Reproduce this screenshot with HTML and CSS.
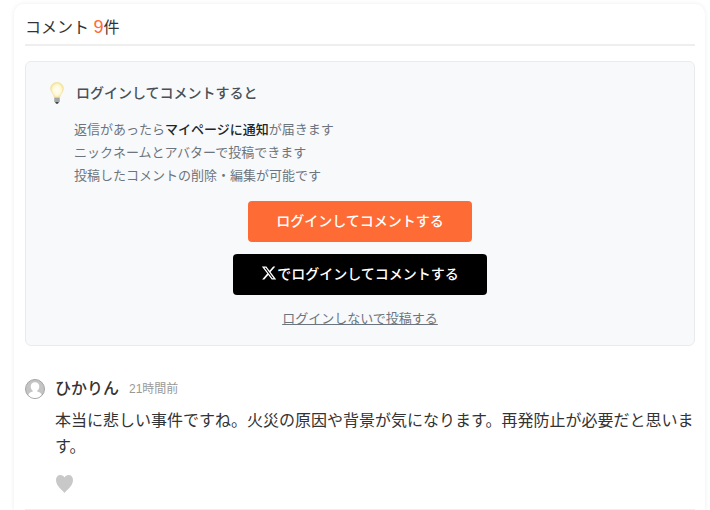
FILE: index.html
```html
<!DOCTYPE html>
<html lang="ja">
<head>
  <meta charset="UTF-8">
  <meta name="viewport" content="width=device-width, initial-scale=1">
  <title>コメント</title>
  <link rel="stylesheet" href="styles.css">
</head>
<body>
  <section class="comment-area">
    <h2 class="comment-title">コメント <span class="comment-count">9</span>件</h2>

    <div class="login-box">
      <h3 class="login-title">
        <svg class="icon-bulb" viewBox="0 0 16 24" aria-hidden="true">
          <defs>
            <radialGradient id="glow" cx="50%" cy="50%" r="55%">
              <stop offset="0" stop-color="#fffef8"/>
              <stop offset="0.6" stop-color="#fff8d6"/>
              <stop offset="1" stop-color="#f5dc85"/>
            </radialGradient>
          </defs>
          <path d="M8 1.500C4.200 1.500 1.600 4.200 1.600 7.600c0 3.900 3.500 5.200 3.700 9h5.400c.2-3.800 3.700-5.100 3.700-9C14.400 4.200 11.800 1.500 8 1.500z" fill="url(#glow)" stroke="#f0dc98" stroke-width=".6"/>
          <path d="M5.300 16.500h5.400v4L9.500 22h-3l-1.200-1.500z" fill="#b4b7b8"/>
          <path d="M5.300 18h5.400M5.300 20h5.400" stroke="#85898b" stroke-width=".7"/>
          <path d="M6.300 21h3.400L9 22.700H7z" fill="#414548"/>
        </svg>
        ログインしてコメントすると
      </h3>
      <ul class="login-list">
        <li>返信があったら<strong>マイページに通知</strong>が届きます</li>
        <li>ニックネームとアバターで投稿できます</li>
        <li>投稿したコメントの削除・編集が可能です</li>
      </ul>
      <div class="login-actions">
        <button type="button" class="btn btn-login">ログインしてコメントする</button>
        <button type="button" class="btn btn-x">
          <svg class="icon-x" viewBox="0 0 24 24" aria-hidden="true">
            <path d="M18.244 2.250h3.308l-7.227 8.260 8.502 11.240H16.170l-5.214-6.817L4.990 21.750H1.680l7.730-8.835L1.254 2.250H8.080l4.713 6.231zm-1.161 17.520h1.833L7.084 4.126H5.117z" fill="currentColor"/>
          </svg>でログインしてコメントする
        </button>
        <a href="#" class="guest-link">ログインしないで投稿する</a>
      </div>
    </div>

    <article class="comment">
      <svg class="avatar" viewBox="0 0 20 20" aria-hidden="true">
        <circle cx="10" cy="10" r="9.500" fill="#c4c4c4" stroke="#a4a4a4"/>
        <path d="M10 3.300c-2.700 0-4.300 1.800-4.300 4.200 0 1.800.9 3.400 2.100 4.200v.9c-1.800.7-3.900 1.200-4.500 3.100C5 17.800 7.400 19 10 19s5-1.200 6.700-3.300c-.6-1.900-2.700-2.400-4.500-3.100v-.9c1.200-.8 2.100-2.400 2.100-4.200 0-2.400-1.600-4.200-4.300-4.200z" fill="#fff"/>
      </svg>
      <div class="comment-body">
        <div class="comment-head">
          <span class="comment-name">ひかりん</span>
          <time class="comment-time">21時間前</time>
        </div>
        <p class="comment-text">本当に悲しい事件ですね。火災の原因や背景が気になります。再発防止が必要だと思います。</p>
        <button type="button" class="like" aria-label="いいね">
          <svg class="icon-heart" viewBox="0 0 18 20" aria-hidden="true">
            <path d="M9.500 19C8 16.200 1 12.600 1 6C1 3 2.800 1 5.300 1C7.400 1 8.800 2 9.500 3.500C10.200 2 11.600 1 13.700 1C16.200 1 18 3 18 6C18 12.600 11 16.200 9.500 19z" fill="#c8c8c8"/>
          </svg>
        </button>
      </div>
    </article>
  </section>
</body>
</html>
```

FILE: styles.css
```css
body {
  margin: 0;
  padding: 4px 5px 0 14px;
  background: #fff;
  color: #333;
  font-family: "Liberation Sans", "Noto Sans CJK JP", sans-serif;
  font-size: 16px;
}

/* card */
.comment-area {
  padding: 10px 10px 0 11px;
  border-radius: 10px 10px 0 0;
  box-shadow: 0 0 5px rgba(0, 0, 0, 0.08);
}
.comment-title {
  margin: 0 0 15px;
  padding-bottom: 3px;
  border-bottom: 2px solid #eee;
  font-size: 16px;
  font-weight: 400;
  line-height: 26px;
}
.comment-count {
  color: #ff6b35;
  font-size: 18px;
}

/* login guide */
.login-box {
  padding: 18px 20px 14px;
  border: 1px solid #e9ecef;
  border-radius: 6px;
  background: #f8f9fb;
}
.login-title {
  display: flex;
  align-items: center;
  gap: 8px;
  margin: 0 0 12px;
  color: #495057;
  font-size: 14px;
  font-weight: 500;
  line-height: 26px;
}
.icon-bulb {
  width: 22px;
  height: 24px;
}
.login-list {
  margin: 0 0 14px;
  padding: 0 0 0 28px;
  list-style: none;
  color: #6c757d;
  font-size: 13px;
  line-height: 23px;
}
.login-list strong {
  color: #212529;
  font-weight: 500;
}
.login-actions {
  display: flex;
  flex-direction: column;
  align-items: center;
  gap: 12px;
}
.btn {
  display: flex;
  align-items: center;
  height: 41px;
  padding: 0 28px 3px;
  border: 0;
  border-radius: 4px;
  color: #fff;
  font-family: inherit;
  font-size: 14px;
  font-weight: 500;
  cursor: pointer;
}
.btn-login {
  background: #ff6b35;
}
.btn-x {
  background: #000;
}
.icon-x {
  width: 16px;
  height: 16px;
}
.guest-link {
  color: #6c757d;
  font-size: 13px;
  line-height: 24px;
}

/* comment */
.comment {
  display: flex;
  gap: 10px;
  padding: 31px 0 15px;
  border-bottom: 1px solid #eee;
}
.avatar {
  flex: none;
  width: 20px;
  height: 20px;
  margin-top: 2px;
}
.comment-head {
  display: flex;
  align-items: center;
  gap: 10px;
  line-height: 24px;
}
.comment-name {
  font-weight: 500;
}
.comment-time {
  color: #999;
  font-size: 12px;
}
.comment-text {
  margin: 7px 0 14px;
  line-height: 26px;
}
.like {
  display: block;
  padding: 0;
  border: 0;
  background: none;
  cursor: pointer;
}
.icon-heart {
  display: block;
  width: 18px;
  height: 20px;
}
```
